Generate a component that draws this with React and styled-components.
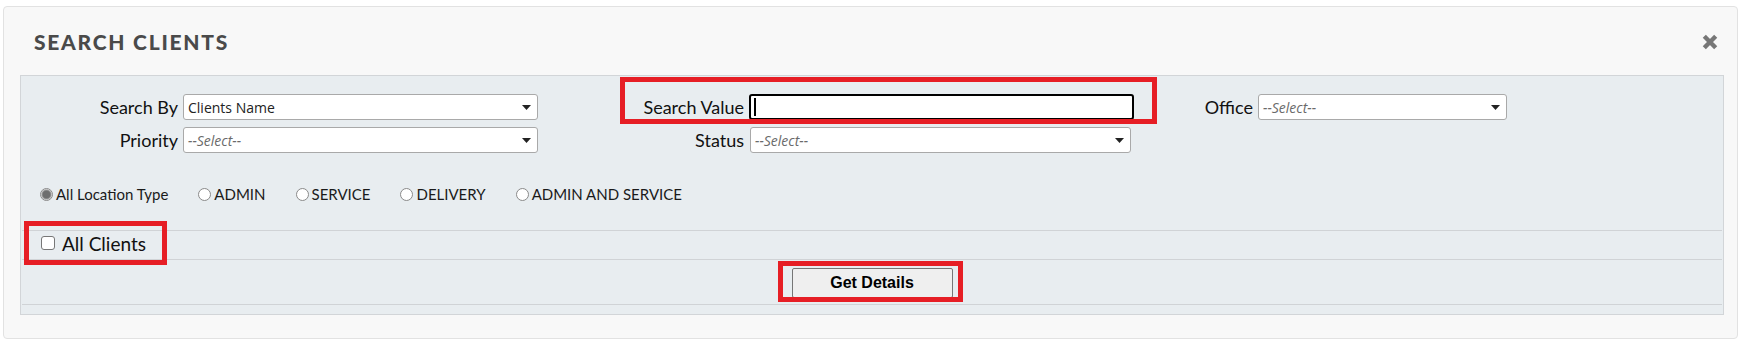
import React from 'react';
import styled, { createGlobalStyle } from 'styled-components';

const GlobalStyle = createGlobalStyle`
  html, body { margin: 0; padding: 0; background: #ffffff; }
  body { font-family: Lato, "Open Sans", sans-serif; color: #111; }
  * { box-sizing: border-box; }
`;

const Page = styled.div`
  position: relative;
  width: 1742px;
  height: 341px;
  padding: 6px 4px 0 3px;
`;

const Modal = styled.section`
  height: 333px;
  background: #f8f8f8;
  border: 1px solid #e2e2e2;
  border-radius: 4px;
  padding: 21px 13px 0 16px;
  display: flex;
  flex-direction: column;
`;

const Header = styled.header`
  height: 28px;
  margin-bottom: 19px;
  padding: 0 6px 0 14px;
  display: flex;
  align-items: center;
  justify-content: space-between;
`;

const Title = styled.h2`
  margin: 0;
  font: 900 21px/28px Lato, "Open Sans", sans-serif;
  letter-spacing: 1.75px;
  color: #4a4a4a;
`;

const CloseButton = styled.button`
  border: 0;
  padding: 0;
  background: none;
  width: 16px;
  height: 16px;
  display: flex;
  cursor: pointer;
`;

const Panel = styled.div`
  height: 240px;
  background: #e8edf0;
  border: 1px solid #d2d5d8;
  display: flex;
  flex-direction: column;
`;

const FieldGrid = styled.div`
  margin-top: 18px;
  display: grid;
  grid-template-columns: 157px 355px 201px 385px 114px 249px;
  grid-auto-rows: 26px;
  column-gap: 5px;
  row-gap: 7px;
  align-items: center;
`;

const Label = styled.label`
  justify-self: end;
  font: 400 18px/1 Lato, sans-serif;
  color: #111;
  white-space: nowrap;
`;

const SelectBox = styled.div`
  width: ${p => p.$w}px;
  height: 26px;
  margin-left: ${p => p.$ml || 0}px;
  background: #fff;
  border: 1px solid #a9a9a9;
  border-radius: 3px;
  display: flex;
  align-items: center;
  justify-content: space-between;
  padding: 0 6px 0 4px;
  font: 400 14px "Open Sans", sans-serif;
  color: ${p => (p.$placeholder ? '#6a6a6a' : '#222')};
  font-style: ${p => (p.$placeholder ? 'italic' : 'normal')};
`;

const TextBox = styled.div`
  width: 385px;
  height: 26px;
  background: #fff;
  border: 2px solid #000;
  border-radius: 3px;
  display: flex;
  align-items: center;
  padding-left: 3px;
`;

const Caret = styled.span`
  width: 2px;
  height: 18px;
  background: #000;
`;

const RadioRow = styled.div`
  margin-top: 31px;
  height: 20px;
  padding-left: 19px;
  display: flex;
  align-items: center;
`;

const RadioItem = styled.label`
  display: flex;
  align-items: center;
  gap: 3px;
  margin-right: 30px;
  font: 400 15px Lato, sans-serif;
  color: #1a1a1a;
`;

const RadioCircle = styled.span`
  width: 13px;
  height: 13px;
  border-radius: 50%;
  border: 1px solid #8a8a8a;
  background: ${p =>
    p.$checked
      ? 'radial-gradient(circle, #6e6e6e 0 3.5px, #9a9a9a 4.5px, #e6e6e6 5.5px)'
      : '#fff'};
  flex: none;
`;

const Rows = styled.div`
  margin-top: 26px;
  display: flex;
  flex-direction: column;
`;

const Row = styled.div`
  height: ${p => p.$h}px;
  margin: 0 1px;
  border-top: 1px solid #d0d3d6;
  display: flex;
  align-items: ${p => (p.$center ? 'flex-start' : 'center')};
  justify-content: ${p => (p.$center ? 'center' : 'flex-start')};
  padding: ${p => (p.$center ? '8px 0 0 0' : '0 0 4px 19px')};
`;

const RowEnd = styled.div`
  margin: 0 1px;
  border-top: 1px solid #d0d3d6;
`;

const CheckLabel = styled.label`
  display: flex;
  align-items: center;
  gap: 7px;
  font: 400 19px Lato, sans-serif;
  color: #111;
`;

const CheckBox = styled.span`
  width: 14px;
  height: 14px;
  border: 1px solid #777;
  border-radius: 3px;
  background: #fff;
  flex: none;
`;

const DetailsButton = styled.button`
  width: 161px;
  height: 30px;
  background: #efefef;
  border: 1px solid #767676;
  border-radius: 2px;
  font: 700 16px "Liberation Sans", Arial, sans-serif;
  color: #000;
  padding: 0;
`;

const Highlight = styled.div`
  position: absolute;
  left: ${p => p.$x}px;
  top: ${p => p.$y}px;
  width: ${p => p.$w}px;
  height: ${p => p.$h}px;
  border: 5px solid #e61e25;
  pointer-events: none;
`;

const Arrow = () => (
  <svg width="9" height="5" viewBox="0 0 9 5">
    <path d="M0 0 H9 L4.5 5 Z" fill="#222" />
  </svg>
);

const Select = ({ w, ml, value, placeholder }) => (
  <SelectBox $w={w} $ml={ml} $placeholder={!value}>
    <span>{value || placeholder}</span>
    <Arrow />
  </SelectBox>
);

const radios = [
  { label: 'All Location Type', checked: true },
  { label: 'ADMIN' },
  { label: 'SERVICE' },
  { label: 'DELIVERY' },
  { label: 'ADMIN AND SERVICE' },
];

export default function App() {
  return (
    <>
      <GlobalStyle />
      <Page>
        <Modal>
          <Header>
            <Title>SEARCH CLIENTS</Title>
            <CloseButton aria-label="Close">
              <svg width="16" height="16" viewBox="0 0 16 16">
                <path d="M2.3 2.3 L13.7 13.7 M13.7 2.3 L2.3 13.7" stroke="#777" strokeWidth="4.4" />
              </svg>
            </CloseButton>
          </Header>
          <Panel>
            <FieldGrid>
              <Label>Search By</Label>
              <Select w={355} value="Clients Name" />
              <Label>Search Value</Label>
              <TextBox>
                <Caret />
              </TextBox>
              <Label>Office</Label>
              <Select w={249} placeholder="--Select--" />

              <Label>Priority</Label>
              <Select w={355} placeholder="--Select--" />
              <Label>Status</Label>
              <Select w={381} ml={1} placeholder="--Select--" />
            </FieldGrid>
            <RadioRow>
              {radios.map(r => (
                <RadioItem key={r.label}>
                  <RadioCircle $checked={r.checked} />
                  {r.label}
                </RadioItem>
              ))}
            </RadioRow>
            <Rows>
              <Row $h={29}>
                <CheckLabel>
                  <CheckBox />
                  All Clients
                </CheckLabel>
              </Row>
              <Row $h={45} $center>
                <DetailsButton>Get Details</DetailsButton>
              </Row>
              <RowEnd />
            </Rows>
          </Panel>
        </Modal>
        <Highlight $x={620} $y={77} $w={537} $h={47} />
        <Highlight $x={24} $y={221} $w={143} $h={44} />
        <Highlight $x={778} $y={261} $w={185} $h={41} />
      </Page>
    </>
  );
}
